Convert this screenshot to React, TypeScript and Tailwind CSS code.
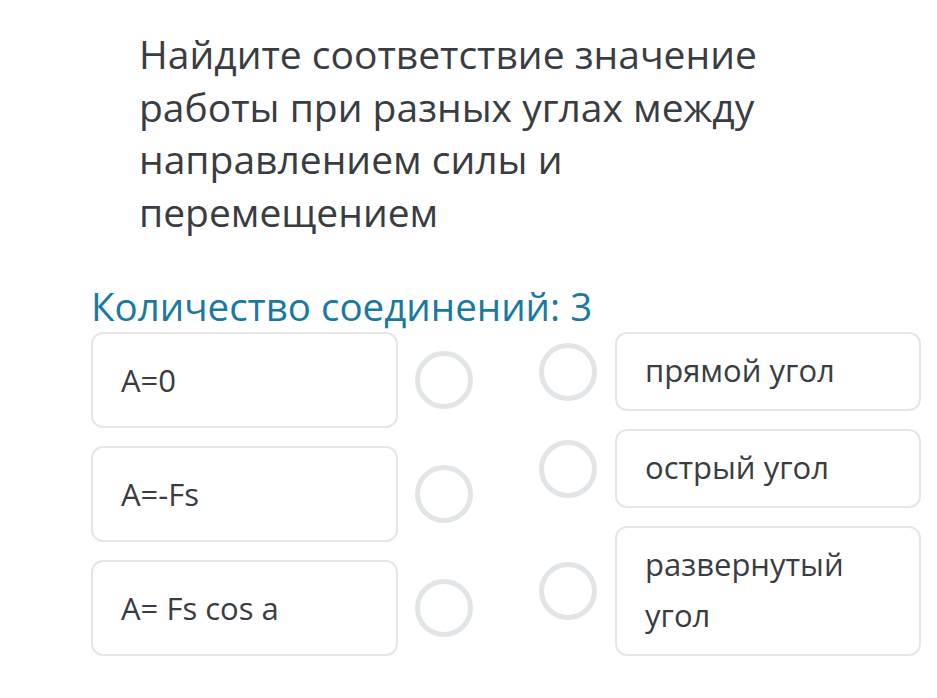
import React from 'react';

const leftItems = ['A=0', 'A=-Fs', 'A= Fs cos a'];
const rightItems = ['прямой угол', 'острый угол', 'развернутый угол'];

const Ring: React.FC = () => (
  <div className="w-[58px] h-[58px] shrink-0 rounded-full border-[5px] border-[#e1e5e8] bg-white" />
);

const App: React.FC = () => {
  return (
    <div
      className="w-[937px] h-[698px] bg-white text-[#393d42] overflow-hidden"
      style={{ fontFamily: '"Open Sans", "Noto Sans", sans-serif' }}
    >
      <h1 className="pl-[139px] pt-[28px] pr-[150px] text-[39px] leading-[52.5px] font-normal">
        Найдите соответствие значение работы при разных углах между направлением силы и перемещением
      </h1>
      <div className="pl-[91px] mt-[46px] text-[#1b79a0] text-[38.5px] leading-[44px]">
        Количество соединений: 3
      </div>
      <div className="flex pl-[91px] mt-[4px]">
        <div className="flex flex-col gap-[18px]">
          {leftItems.map((t) => (
            <div key={t} className="flex items-center gap-[17px]">
              <div className="w-[307px] h-[96px] flex items-center px-[28px] border-2 border-[#e6e6e6] rounded-[12px] text-[31px] leading-[50px]">
                {t}
              </div>
              <Ring />
            </div>
          ))}
        </div>
        <div className="flex flex-col gap-[18px] ml-[66px]">
          {rightItems.map((t) => (
            <div key={t} className="flex items-center gap-[18px]">
              <Ring />
              <div className="w-[306px] pl-[28px] pr-[30px] pt-[11px] pb-[13px] border-2 border-[#e6e6e6] rounded-[12px] text-[31px] leading-[51px]">
                {t}
              </div>
            </div>
          ))}
        </div>
      </div>
    </div>
  );
};

export default App;
